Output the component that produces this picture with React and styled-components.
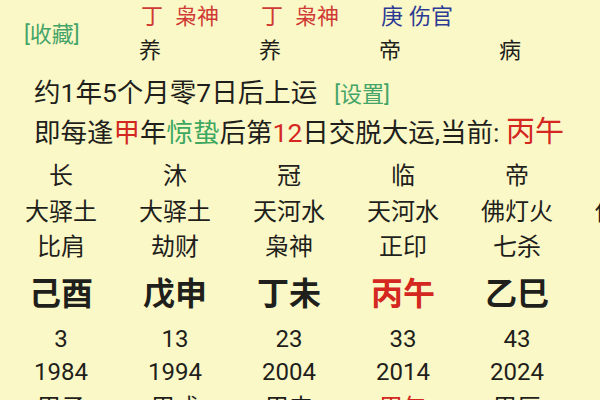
import React from "react";
import styled, { createGlobalStyle } from "styled-components";

const Global = createGlobalStyle`
  html, body { margin: 0; padding: 0; background: #fbf8c7; }
  body { font-family: Roboto, "Noto Sans CJK SC", sans-serif; color: #1f1f1c; }
`;

const Page = styled.div`
  width: 600px;
  height: 400px;
  overflow: hidden;
  background: #fbf8c7;
  display: flex;
  flex-direction: column;
`;

const Top = styled.div`
  display: flex;
  height: 68px;
`;

const Fav = styled.div`
  width: 90px;
  box-sizing: border-box;
  padding-left: 24px;
  padding-bottom: 4px;
  display: flex;
  align-items: center;
  font-size: 22px;
  color: #45a468;
  white-space: nowrap;
`;

const TopGrid = styled.div`
  display: grid;
  grid-template-columns: repeat(4, 120px);
  grid-template-rows: 34px 34px;
`;

const GodLabel = styled.div`
  padding-left: 51px;
  font-size: 22px;
  line-height: 34px;
  white-space: nowrap;
  color: ${(p) => p.$color};
`;

const Stem = styled.span`
  margin-right: ${(p) => p.$gap}px;
`;

const Stage = styled.div`
  text-align: center;
  font-size: 22px;
  line-height: 34px;
`;

const Line = styled.div`
  padding-left: 34px;
  font-size: ${(p) => p.$size}px;
  line-height: ${(p) => p.$lh}px;
  margin-top: ${(p) => p.$mt || 0}px;
  white-space: nowrap;
`;

const Tint = styled.span`
  color: ${(p) => p.$color};
  font-size: ${(p) => (p.$size ? `${p.$size}px` : "inherit")};
`;

const Link = styled.span`
  font-size: 22px;
  color: #45a468;
  margin-left: 17px;
`;

const Board = styled.div`
  margin-top: 6px;
  padding-left: 4px;
  display: flex;
  flex-direction: column;
`;

const Row = styled.div`
  display: grid;
  grid-template-columns: repeat(6, 114px);
  height: ${(p) => p.$h}px;
  line-height: ${(p) => p.$h}px;
  font-size: ${(p) => p.$size}px;
  font-weight: ${(p) => (p.$bold ? 700 : 400)};
`;

const Cell = styled.div`
  text-align: center;
  white-space: nowrap;
  color: ${(p) => (p.$red ? "#d3271f" : "inherit")};
`;

const RED = "#cf3a34";
const BLUE = "#2c3a94";

const gods = [
  { stem: "丁", god: "枭神", color: RED, gap: 12 },
  { stem: "丁", god: "枭神", color: RED, gap: 12 },
  { stem: "庚", god: "伤官", color: BLUE, gap: 6 },
  null,
];
const stages = ["养", "养", "帝", "病"];

const rows = [
  { h: 36, size: 24, cells: ["长", "沐", "冠", "临", "帝", "衰"] },
  { h: 36, size: 24, cells: ["大驿土", "大驿土", "天河水", "天河水", "佛灯火", "佛灯火"] },
  { h: 34, size: 24, cells: ["比肩", "劫财", "枭神", "正印", "七杀", "正官"] },
  { h: 60, size: 32, bold: true, red: 3, cells: ["己酉", "戊申", "丁未", "丙午", "乙巳", "甲辰"] },
  { h: 30, size: 24, cells: ["3", "13", "23", "33", "43", "53"] },
  { h: 36, size: 24, cells: ["1984", "1994", "2004", "2014", "2024", "2034"] },
  { h: 36, size: 24, red: 3, cells: ["甲子", "甲戌", "甲申", "甲午", "甲辰", "甲寅"] },
];

export default function App() {
  return (
    <>
      <Global />
      <Page>
        <Top>
          <Fav>[收藏]</Fav>
          <TopGrid>
            {gods.map((g, i) =>
              g ? (
                <GodLabel key={"g" + i} $color={g.color}>
                  <Stem $gap={g.gap}>{g.stem}</Stem>
                  {g.god}
                </GodLabel>
              ) : (
                <GodLabel key={"g" + i} $color={RED} />
              )
            )}
            {stages.map((s, i) => (
              <Stage key={"s" + i}>{s}</Stage>
            ))}
          </TopGrid>
        </Top>
        <Line $size={26.5} $lh={36} $mt={7}>
          约1年5个月零7日后上运<Link>[设置]</Link>
        </Line>
        <Line $size={26.5} $lh={38}>
          即每逢<Tint $color="#d3271f">甲</Tint>年<Tint $color="#3ea861">惊蛰</Tint>后第
          <Tint $color="#d3271f">12</Tint>日交脱大运,当前: <Tint $color="#d3271f" $size={29}>丙午</Tint>
        </Line>
        <Board>
          {rows.map((r, ri) => (
            <Row key={ri} $h={r.h} $size={r.size} $bold={r.bold}>
              {r.cells.map((c, ci) => (
                <Cell key={ci} $red={r.red === ci}>
                  {c}
                </Cell>
              ))}
            </Row>
          ))}
        </Board>
      </Page>
    </>
  );
}
